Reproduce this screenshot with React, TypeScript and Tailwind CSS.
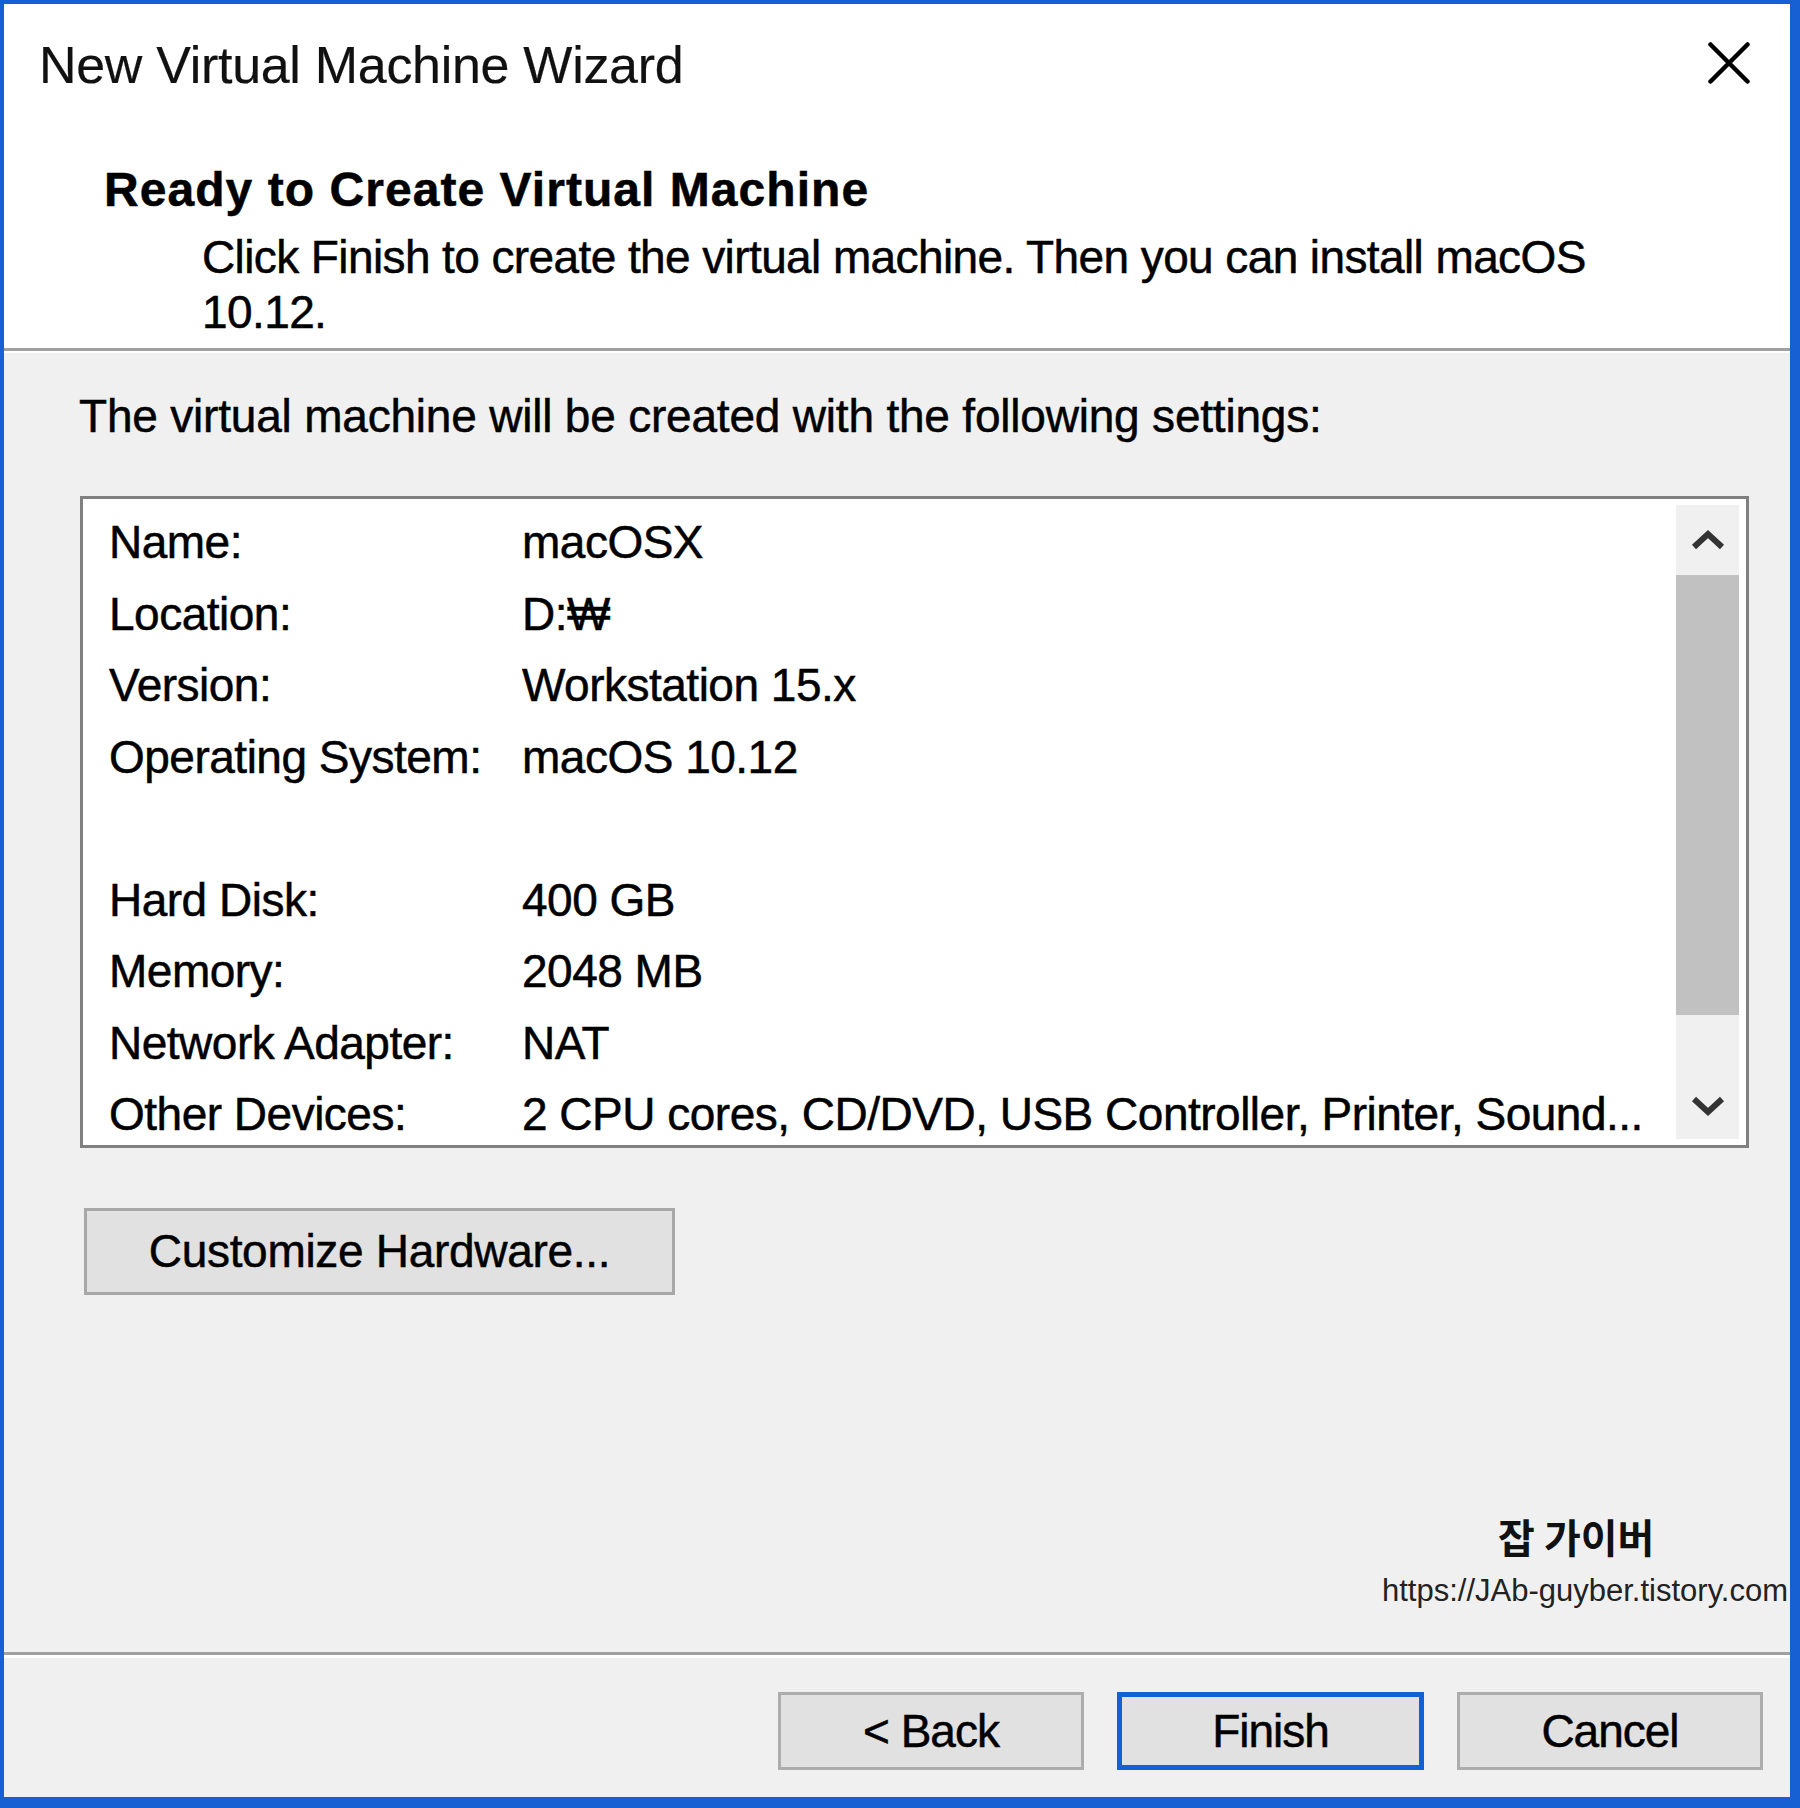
const rows: [string, string][] = [
  ["Name:", "macOSX"],
  ["Location:", "D:₩"],
  ["Version:", "Workstation 15.x"],
  ["Operating System:", "macOS 10.12"],
  ["", ""],
  ["Hard Disk:", "400 GB"],
  ["Memory:", "2048 MB"],
  ["Network Adapter:", "NAT"],
  ["Other Devices:", "2 CPU cores, CD/DVD, USB Controller, Printer, Sound..."],
];

function Chevron({ up }: { up: boolean }) {
  return (
    <svg width="34" height="22" viewBox="0 0 34 22">
      <path
        d={up ? "M3 18 L17 5 L31 18" : "M3 4 L17 17 L31 4"}
        fill="none"
        stroke="#333"
        strokeWidth="6"
      />
    </svg>
  );
}

export default function App() {
  return (
    <div className="relative w-[1800px] h-[1808px] flex flex-col bg-[#f0f0f0] border-l-4 border-t-4 border-r-[10px] border-b-[11px] border-[#1660d4] text-black font-['Liberation_Sans',Arial,sans-serif] [-webkit-text-stroke:0.5px_currentColor]">
      {/* Header */}
      <div className="bg-white pt-[31px] pb-[8px] flex flex-col">
        <div className="flex items-start justify-between">
          <div className="pl-[35px] text-[52px] leading-[60px] tracking-[-0.3px] text-[#111] [-webkit-text-stroke:0.2px_currentColor]">
            New Virtual Machine Wizard
          </div>
          <svg className="mt-[7px] mr-[40px]" width="42" height="42" viewBox="0 0 42 42">
            <path d="M2.5 2.5 L39.5 39.5 M39.5 2.5 L2.5 39.5" stroke="#000" strokeWidth="4.5" strokeLinecap="round" />
          </svg>
        </div>
        <div className="mt-[67px] pl-[100px] text-[48px] leading-[56px] font-bold tracking-[1.05px]">
          Ready to Create Virtual Machine
        </div>
        <div className="mt-[12px] pl-[198px]">
          <p className="w-[1480px] text-[46px] leading-[55px] tracking-[-0.6px]">
            Click Finish to create the virtual machine. Then you can install macOS 10.12.
          </p>
        </div>
      </div>
      <div className="h-[3px] bg-[#a0a0a0]" />
      <div className="h-[2px] bg-white" />

      {/* Body */}
      <div className="flex-1 flex flex-col">
        <div className="mt-[36px] pl-[75px] text-[46px] leading-[55px] tracking-[-0.2px]">
          The virtual machine will be created with the following settings:
        </div>

        <div className="mt-[52px] ml-[76px] mr-[41px] h-[652px] border-[3px] border-[#808080] bg-white flex">
          <div className="flex-1 pt-[8px] pl-[26px] text-[46px] tracking-[-0.5px] overflow-hidden">
            {rows.map(([k, v], i) => (
              <div key={i} className="flex h-[71.5px] leading-[71.5px] whitespace-nowrap">
                <div className="w-[413px] shrink-0">{k || "\u00a0"}</div>
                <div>{v}</div>
              </div>
            ))}
          </div>
          <div className="w-[63px] mt-[6px] mb-[6px] mr-[7px] bg-[#f0f0f0] flex flex-col">
            <div className="h-[70px] flex items-center justify-center">
              <Chevron up={true} />
            </div>
            <div className="h-[440px] bg-[#c1c1c1]" />
            <div className="flex-1" />
            <div className="h-[66px] flex items-center justify-center">
              <Chevron up={false} />
            </div>
          </div>
        </div>

        <div className="mt-[60px] ml-[80px] w-[591px] h-[87px] bg-[#e1e1e1] border-[3px] border-[#a8a8a8] flex items-center justify-center text-[46px] tracking-[-0.3px]">
          Customize Hardware...
        </div>

        <div className="flex-1" />

        <div className="h-[3px] bg-[#a0a0a0]" />
        <div className="h-[3px] bg-white" />

        <div className="pt-[34px] pb-[27px] pr-[27px] flex justify-end gap-[33px] text-[46px] tracking-[-1px]">
          <div className="w-[306px] h-[78px] bg-[#e1e1e1] border-[3px] border-[#adadad] flex items-center justify-center">
            &lt; Back
          </div>
          <div className="w-[307px] h-[78px] bg-[#e1e1e1] border-[5px] border-[#0f62d6] flex items-center justify-center">
            Finish
          </div>
          <div className="w-[306px] h-[78px] bg-[#e1e1e1] border-[3px] border-[#adadad] flex items-center justify-center">
            Cancel
          </div>
        </div>
      </div>

      {/* Watermark overlay */}
      <div className="absolute left-[1494px] top-[1512px] text-[40px] leading-[40px] font-bold whitespace-nowrap font-['Noto_Sans_CJK_KR',sans-serif] text-[#111] [-webkit-text-stroke:0px]">
        잡 가이버
      </div>
      <div className="absolute left-[1378px] top-[1570px] text-[31px] leading-[34px] whitespace-nowrap text-[#222] [-webkit-text-stroke:0px]">
        https://JAb-guyber.tistory.com
      </div>
    </div>
  );
}
